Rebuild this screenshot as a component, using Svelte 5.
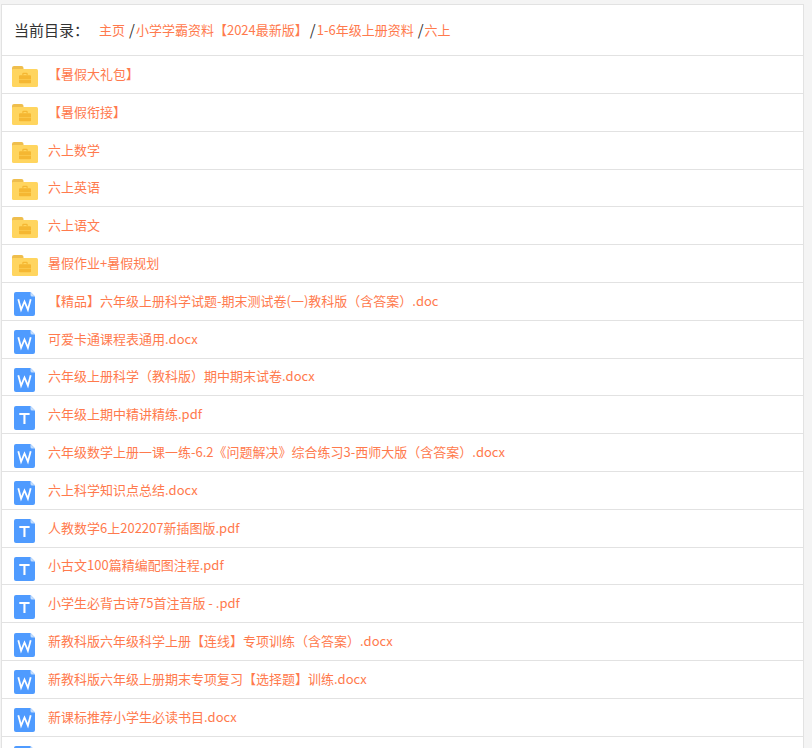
<script>
  const folders = ['【暑假大礼包】', '【暑假衔接】', '六上数学', '六上英语', '六上语文', '暑假作业+暑假规划'];
  const files = [
    ['w', '【精品】六年级上册科学试题-期末测试卷(一)教科版（含答案）.doc'],
    ['w', '可爱卡通课程表通用.docx'],
    ['w', '六年级上册科学（教科版）期中期末试卷.docx'],
    ['t', '六年级上期中精讲精练.pdf'],
    ['w', '六年级数学上册一课一练-6.2《问题解决》综合练习3-西师大版（含答案）.docx'],
    ['w', '六上科学知识点总结.docx'],
    ['t', '人教数学6上202207新插图版.pdf'],
    ['t', '小古文100篇精编配图注程.pdf'],
    ['t', '小学生必背古诗75首注音版 - .pdf'],
    ['w', '新教科版六年级科学上册【连线】专项训练（含答案）.docx'],
    ['w', '新教科版六年级上册期末专项复习【选择题】训练.docx'],
    ['w', '新课标推荐小学生必读书目.docx'],
    // last row is cut by the window, its name isn't visible
    ['w', '']
  ];
</script>

<div class="list">
  <div class="crumbs">
    <span class="label">当前目录：</span>
    <a href="#top" class="first">主页</a>
    <span class="sep">/</span><a href="#top">小学学霸资料【2024最新版】</a>
    <span class="sep wide">/</span><a href="#top">1-6年级上册资料</a>
    <span class="sep">/</span><a href="#top">六上</a>
  </div>

  {#each folders as name}
    <div class="row">
      <svg class="folder" width="26" height="21" viewBox="0 0 26 21">
        <path d="M0 2a2 2 0 0 1 2-2h7.500a2 2 0 0 1 2 2v2H0z" fill="#efbe4d" />
        <path d="M0 4a1 1 0 0 1 1-1h23.500a1.500 1.500 0 0 1 1.500 1.500v15a1.500 1.500 0 0 1-1.500 1.500H1.500A1.500 1.500 0 0 1 0 19.500z" fill="#ffd55f" />
        <path d="M10.300 9.300V7.700a1 1 0 0 1 1-1h3.400a1 1 0 0 1 1 1v1.600h-1.200V7.900h-3v1.400z" fill="#f5b732" />
        <path d="M7 10.300a1 1 0 0 1 1-1h10a1 1 0 0 1 1 1v2.900H7zM7 13.800h12v2.700a.8.8 0 0 1-.8.800H7.800a.8.8 0 0 1-.8-.8z" fill="#f5b732" />
      </svg>
      <a href="#top">{name}</a>
    </div>
  {/each}

  {#each files as [kind, name]}
    <div class="row">
      <span class="doc">
        <svg width="21" height="24" viewBox="0 0 21 24">
          <path d="M2 0h14.500L21 4.500V22a2 2 0 0 1-2 2H2a2 2 0 0 1-2-2V2a2 2 0 0 1 2-2z" fill="#4f9bff" />
          <path d="M16.500 0L21 4.500h-3a1.500 1.500 0 0 1-1.500-1.500z" fill="#c5defc" />
          {#if kind === 'w'}
            <path d="M4.300 7.200L7.100 17.700L10.500 9.500L13.900 17.700L16.700 7.200" fill="none" stroke="#fff" stroke-width="1.800" />
          {:else}
            <path d="M5.300 7h10.300v2.100h-4.100V18H9.400V9.100H5.300z" fill="#fff" />
          {/if}
        </svg>
      </span>
      {#if name}
        <a href="#top">{name}</a>
      {/if}
    </div>
  {/each}
</div>

<style>
  :global(body) {
    background: #f4f4f4;
    font-family: "Noto Sans CJK SC", "Noto Sans", sans-serif;
    font-size: 13px;
    color: #333;
    height: 748px;
    overflow: hidden;
  }

  .list {
    width: 801px;
    margin: 4px 0 0 1px;
    background: #fff;
    border: 1px solid #e2e2e2;
    border-bottom: none;
  }

  .crumbs {
    height: 51.200px;
    box-sizing: border-box;
    display: flex;
    align-items: center;
    padding: 0 0 2px 12px;
    border-bottom: 1px solid #e2e2e2;
  }

  .label {
    font-size: 15px;
    margin-right: 10px;
  }

  .sep {
    font-size: 15px;
    margin: 0 1px 0 4px;
  }

  .sep.wide {
    margin-left: 2px;
  }

  a {
    color: #ff7a4d;
    text-decoration: none;
  }

  .row {
    height: 37.800px;
    box-sizing: border-box;
    display: flex;
    align-items: center;
    border-bottom: 1px solid #e2e2e2;
  }

  .row a {
    margin-bottom: 2px;
  }

  .folder {
    flex: none;
    margin: 4px 10px 0 10px;
  }

  .doc {
    flex: none;
    display: flex;
    margin: 6px 13px 0 12px;
  }
</style>
